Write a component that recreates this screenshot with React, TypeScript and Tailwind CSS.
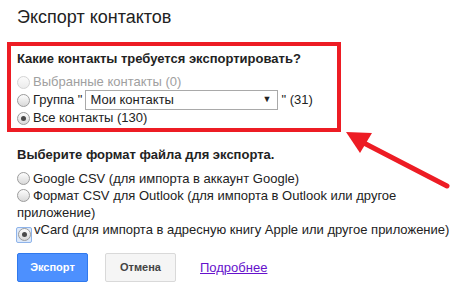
import React from 'react';

type RadioProps = { checked?: boolean; disabled?: boolean; focused?: boolean };

function Radio({ checked, disabled, focused }: RadioProps) {
  const circle = (
    <span
      className={`inline-flex items-center justify-center w-[13px] h-[13px] rounded-full border ${
        disabled
          ? 'border-[#d4d4d4] bg-gradient-to-b from-[#fbfbfb] to-[#ececec]'
          : 'border-[#9c9c9c] bg-gradient-to-b from-[#fdfdfd] to-[#d9d9d9]'
      }`}
    >
      {checked && <span className="w-[5px] h-[5px] rounded-full bg-[#4a4a4a]" />}
    </span>
  );

  if (focused) {
    return (
      <span className="inline-flex items-center justify-center w-[16px] h-[16px] -ml-[1px] mr-[2px] align-[-3px] rounded-[2px] border border-[#8fb4ea] bg-[#dde9fa]">
        {circle}
      </span>
    );
  }

  return <span className="inline-flex mr-[3px] align-[-2px]">{circle}</span>;
}

export default function App() {
  return (
    <div className="relative w-[461px] h-[287px] overflow-hidden bg-white text-[13px] text-[#222] font-['Liberation_Sans',Arial,sans-serif]">
      {/* Заголовок */}
      <h1 className="pl-[17px] pt-[5px] text-[18px] leading-[24px] text-[#222]">Экспорт контактов</h1>

      {/* Какие контакты — в красной рамке */}
      <div className="ml-[7px] mt-[13px] w-[334px] h-[90px] border-[4px] border-[#ed1c24] pl-[6px] pt-[4px]">
        <div className="font-bold leading-[17px]">Какие контакты требуется экспортировать?</div>
        <div className="mt-[6px] h-[18px] flex items-center text-[#a0a0a0]">
          <Radio disabled />
          Выбранные контакты (0)
        </div>
        <div className="h-[18px] flex items-center">
          <Radio />
          Группа "
          <div className="ml-[3px] mr-[3px] w-[193px] h-[20px] border border-[#a9a9a9] bg-white flex items-center justify-between pl-[4px] pr-[6px]">
            <span>Мои контакты</span>
            <span className="text-[9px]">▼</span>
          </div>
          " (31)
        </div>
        <div className="h-[18px] flex items-center">
          <Radio checked />
          Все контакты (130)
        </div>
      </div>

      {/* Формат файла */}
      <div className="pl-[17px] mt-[14px] w-[461px]">
        <div className="font-bold leading-[17px]">Выберите формат файла для экспорта.</div>
        <div className="mt-[7px] leading-[17px]">
          <div>
            <Radio />
            Google CSV (для импорта в аккаунт Google)
          </div>
          <div className="w-[400px]">
            <Radio />
            Формат CSV для Outlook (для импорта в Outlook или другое приложение)
          </div>
          <div className="h-[17px] whitespace-nowrap">
            <Radio checked focused />
            vCard (для импорта в адресную книгу Apple или другое приложение)
          </div>
        </div>

        {/* Кнопки */}
        <div className="mt-[15px] flex items-center">
          <button className="w-[71px] h-[29px] rounded-[2px] border border-[#3079ed] bg-[#4d90fe] text-white text-[11px] font-bold">
            Экспорт
          </button>
          <button className="ml-[17px] w-[71px] h-[29px] rounded-[2px] border border-[#d9d9d9] bg-[#f5f5f5] text-[#444] text-[11px] font-bold">
            Отмена
          </button>
          <a href="#" className="ml-[24px] text-[#6611cc] underline">
            Подробнее
          </a>
        </div>
      </div>

      {/* Красная стрелка */}
      <svg className="absolute left-0 top-0 pointer-events-none" width="461" height="287" viewBox="0 0 461 287">
        <line x1="447" y1="186" x2="360" y2="141" stroke="#ed1c24" strokeWidth="5" strokeLinecap="round" />
        <polygon points="346,132 372,133 360,153" fill="#ed1c24" />
      </svg>
    </div>
  );
}
